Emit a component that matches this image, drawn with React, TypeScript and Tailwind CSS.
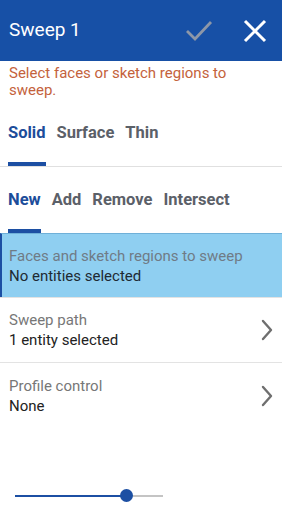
import React from "react";

function Chevron() {
  return (
    <svg width="12" height="22" viewBox="0 0 12 22" className="shrink-0">
      <path d="M2 2 L10 11 L2 20" fill="none" stroke="#6f6f6f" strokeWidth="2.4" strokeLinecap="round" strokeLinejoin="round" />
    </svg>
  );
}

function Tab({ label, active }: { label: string; active?: boolean }) {
  return (
    <div className="relative flex h-full items-center">
      <span className={`text-[16.5px] font-bold ${active ? "text-[#1c4d9a]" : "text-[#5b6068]"}`}>{label}</span>
      {active && <div className="absolute bottom-0 left-0 right-0 h-[4px] bg-[#1c4fa3]" />}
    </div>
  );
}

export default function App() {
  return (
    <div className="flex h-[513px] w-[282px] flex-col bg-white font-['Roboto',sans-serif]">
      <div className="flex h-[61px] shrink-0 items-center bg-[#1750a6] pl-[9px] pr-[15px]">
        <span className="flex-1 text-[19px] text-white">Sweep 1</span>
        <svg width="28" height="22" viewBox="0 0 28 22" className="mr-[30px]">
          <path d="M2 11 L10 19 L26 2" fill="none" stroke="#8d97a8" strokeWidth="2.8" />
        </svg>
        <svg width="24" height="24" viewBox="0 0 24 24">
          <path d="M2 2 L22 22 M22 2 L2 22" fill="none" stroke="#ffffff" strokeWidth="3" />
        </svg>
      </div>

      <p className="px-[9px] pt-[4px] text-[15px] leading-[17px] text-[#c4623c]">
        Select faces or sketch regions to sweep.
      </p>

      <div className="mt-[1px] flex h-[67px] shrink-0 gap-[11px] border-b border-[#e0e0e0] px-[8px]">
        <Tab label="Solid" active />
        <Tab label="Surface" />
        <Tab label="Thin" />
      </div>

      <div className="flex h-[66px] shrink-0 gap-[11px] px-[8px]">
        <Tab label="New" active />
        <Tab label="Add" />
        <Tab label="Remove" />
        <Tab label="Intersect" />
      </div>

      <div className="flex h-[64px] shrink-0 flex-col justify-center border-l-[2px] border-t border-[#1c4fa3] border-t-[#6fb0d8] bg-[#8fcff1] pl-[7px]">
        <span className="text-[15px] leading-[20px] text-[#6f7b86]">Faces and sketch regions to sweep</span>
        <span className="text-[15px] leading-[20px] text-[#1e2a33]">No entities selected</span>
      </div>

      <div className="flex h-[66px] shrink-0 items-center border-b border-t border-[#e3e3e3] pl-[9px] pr-[9px]">
        <div className="flex flex-1 flex-col">
          <span className="text-[15px] leading-[20px] text-[#777777]">Sweep path</span>
          <span className="text-[15px] leading-[20px] text-[#222222]">1 entity selected</span>
        </div>
        <Chevron />
      </div>

      <div className="flex h-[65px] shrink-0 items-center pl-[9px] pr-[9px]">
        <div className="flex flex-1 flex-col">
          <span className="text-[15px] leading-[20px] text-[#777777]">Profile control</span>
          <span className="text-[15px] leading-[20px] text-[#222222]">None</span>
        </div>
        <Chevron />
      </div>

      <div className="mt-[67px] flex items-center px-[15px]">
        <div className="relative h-[2px] w-[148px] bg-[#c4c4c4]">
          <div className="h-full w-[111px] bg-[#1c4fa3]" />
          <div className="absolute left-[105px] top-[-6px] h-[13px] w-[13px] rounded-full bg-[#1c4fa3]" />
        </div>
      </div>
    </div>
  );
}
